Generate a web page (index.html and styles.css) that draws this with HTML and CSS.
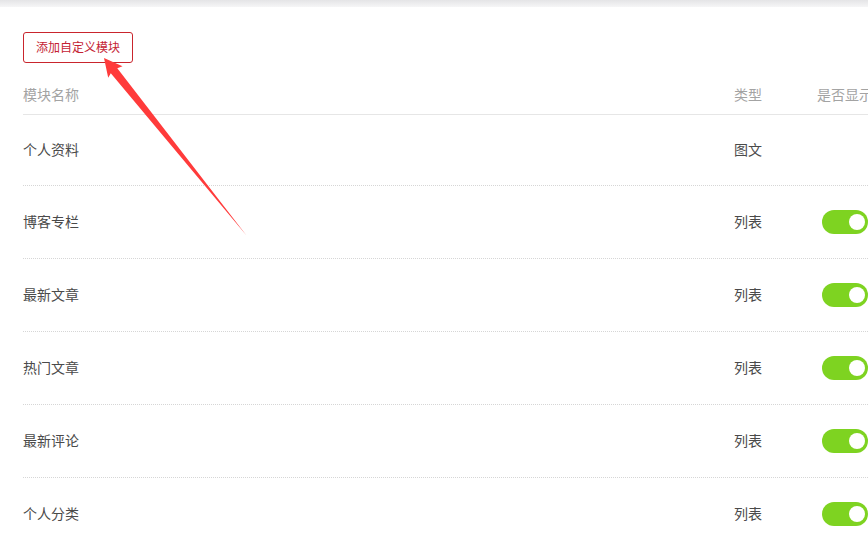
FILE: index.html
```html
<!DOCTYPE html>
<html lang="zh-CN">
<head>
<meta charset="utf-8">
<title>模块管理</title>
<link rel="stylesheet" href="styles.css">
</head>
<body>
<div class="topbar"></div>
<main class="panel">
  <button class="add-btn">添加自定义模块</button>
  <div class="table">
    <div class="row head">
      <div class="c-name">模块名称</div>
      <div class="c-type">类型</div>
      <div class="c-show">是否显示</div>
    </div>
    <div class="row">
      <div class="c-name">个人资料</div>
      <div class="c-type">图文</div>
      <div class="c-show"></div>
    </div>
    <div class="row">
      <div class="c-name">博客专栏</div>
      <div class="c-type">列表</div>
      <div class="c-show"><span class="toggle on"></span></div>
    </div>
    <div class="row">
      <div class="c-name">最新文章</div>
      <div class="c-type">列表</div>
      <div class="c-show"><span class="toggle on"></span></div>
    </div>
    <div class="row">
      <div class="c-name">热门文章</div>
      <div class="c-type">列表</div>
      <div class="c-show"><span class="toggle on"></span></div>
    </div>
    <div class="row">
      <div class="c-name">最新评论</div>
      <div class="c-type">列表</div>
      <div class="c-show"><span class="toggle on"></span></div>
    </div>
    <div class="row">
      <div class="c-name">个人分类</div>
      <div class="c-type">列表</div>
      <div class="c-show"><span class="toggle on"></span></div>
    </div>
  </div>
</main>
<svg class="arrow" width="868" height="533" viewBox="0 0 868 533">
  <polygon points="104,58 122.5,66.2 117.3,68.2 246.5,235.5 110.8,73.2 108.2,77.8" fill="#ff3b3b"/>
</svg>
</body>
</html>
```
FILE: styles.css
```css
html, body {
  margin: 0;
  padding: 0;
  background: #fff;
  overflow: hidden;
  width: 868px;
  height: 533px;
}
body {
  font-family: "Noto Sans CJK SC", "Noto Sans", sans-serif;
  position: relative;
}
.topbar {
  height: 7px;
  background: linear-gradient(#e4e4e6, #f6f6f7);
}
.panel {
  padding: 25px 0 0 23px;
  width: 920px;
}
.add-btn {
  display: block;
  box-sizing: border-box;
  width: 110px;
  height: 31px;
  padding: 0 0 1px 0;
  border: 1px solid #c9252d;
  border-radius: 3px;
  background: #fff;
  color: #c42233;
  font-family: inherit;
  font-size: 12px;
  line-height: 28px;
  text-align: center;
  margin: 0 0 22px 0;
}
.table {
  width: 897px;
}
.row {
  display: flex;
  align-items: center;
  padding: 24px 0;
  border-top: 1px dotted #d6d6d6;
  font-size: 14px;
  line-height: 20px;
  color: #4a4a4a;
}
.row.head {
  padding: 0 0 9px 0;
  line-height: 18px;
  color: #a3a3a3;
  border-top: none;
  border-bottom: 1px solid #e6e6e6;
}
.row.head + .row {
  border-top: none;
}
.c-name, .c-type {
  padding-bottom: 2px;
}
.c-name {
  width: 711px;
}
.c-type {
  width: 83px;
}
.c-show {
  flex: 1;
  display: flex;
  white-space: nowrap;
}
.row.head .c-show {
  padding-bottom: 2px;
}
.row .c-show:empty {
  height: 22px;
}
.toggle {
  display: block;
  position: relative;
  width: 46px;
  height: 24px;
  border-radius: 12px;
  margin-left: 5px;
  background: #7ed321;
}
.toggle::after {
  content: "";
  position: absolute;
  right: 3px;
  top: 4px;
  width: 16px;
  height: 16px;
  border-radius: 50%;
  background: #fff;
}
.arrow {
  position: absolute;
  left: 0;
  top: 0;
  pointer-events: none;
}
```
